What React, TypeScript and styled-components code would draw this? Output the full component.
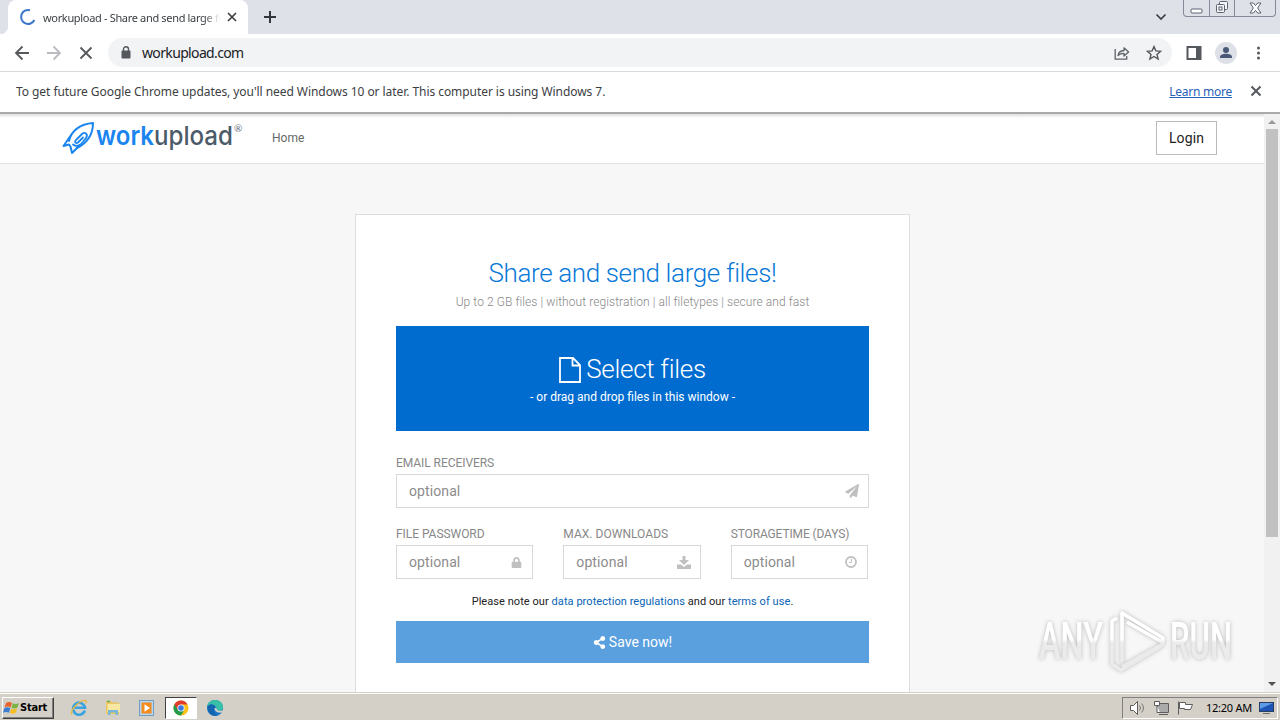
import React from "react";
import styled, { createGlobalStyle, css } from "styled-components";
import { FaPaperPlane, FaLock, FaShareAlt } from "react-icons/fa";

const App: React.FC = () => {
  return (
    <Desktop>
      <GlobalStyle />
      <TabStrip>
        <TabCurve />
        <Tab>
          <Spinner viewBox="0 0 18 18">
            <path
              d="M11 2.2A7 7 0 1 0 15.4 12"
              fill="none"
              stroke="#3b78c9"
              strokeWidth="2"
            />
          </Spinner>
          <TabTitle>workupload - Share and send large files</TabTitle>
          <svg width="10" height="10" viewBox="0 0 10 10">
            <path d="M1 1l8 8M9 1l-8 8" stroke="#3c4043" strokeWidth="1.7" />
          </svg>
        </Tab>
        <NewTab width="12" height="12" viewBox="0 0 12 12">
          <path d="M6 0v12M0 6h12" stroke="#33373b" strokeWidth="2" />
        </NewTab>
        <Chevron width="12" height="8" viewBox="0 0 12 8">
          <path
            d="M1.5 1.5L6 6l4.5-4.5"
            fill="none"
            stroke="#3c4043"
            strokeWidth="1.7"
          />
        </Chevron>
        <WindowButtons>
          <WindowButton $width={25}>
            <svg width="13" height="6" viewBox="0 0 13 6">
              <rect x="1" y="1" width="11" height="4" rx="1" fill="#fff" stroke="#5c6270" />
            </svg>
          </WindowButton>
          <WindowButton $width={25}>
            <svg width="14" height="14" viewBox="0 0 14 14">
              <g fill="#f4f6f9" stroke="#5c6270">
                <rect x="4.5" y="1.5" width="8" height="8" rx="1" />
                <rect x="1.5" y="4.5" width="8" height="8" rx="1" />
                <rect x="4" y="7" width="3" height="3" />
              </g>
            </svg>
          </WindowButton>
          <WindowButton $width={41}>
            <svg width="13" height="12" viewBox="0 0 13 12">
              <path
                d="M1 1h3.4l2.1 2.6L8.600 1H12L8.600 6l3.400 5H8.600L6.500 8.400 4.400 11H1l3.400-5z"
                fill="#fff"
                stroke="#5c6270"
              />
            </svg>
          </WindowButton>
        </WindowButtons>
      </TabStrip>

      <Toolbar>
        <NavIcons width="82" height="16" viewBox="0 0 82 16">
          <g fill="none" strokeWidth="1.8">
            <path d="M15 8H2M8.500 1.500L2 8l6.500 6.500" stroke="#55585c" />
            <path d="M33 8h13M39.500 1.500L46 8l-6.500 6.500" stroke="#b9bbbe" />
            <path d="M66.500 2.500l11 11M77.500 2.500l-11 11" stroke="#55585c" />
          </g>
        </NavIcons>
        <AddressBar>
          <svg width="10" height="13" viewBox="0 0 10 13">
            <rect x="0.500" y="4.500" width="9" height="8" rx="1" fill="#55585c" />
            <path d="M2.500 5V3.200a2.500 2.500 0 0 1 5 0V5" fill="none" stroke="#55585c" strokeWidth="1.400" />
          </svg>
          <Url>workupload.com</Url>
          <svg width="16" height="14" viewBox="0 0 16 14">
            <g fill="none" stroke="#5f6368" strokeWidth="1.300">
              <path d="M1.200 3v10.200h11.500V10" />
              <path d="M4 9.500c.5-3.200 2.500-4.800 6-5V1.800L14.600 6 10 10V7.300C7.500 7.200 5.600 7.800 4 9.500z" strokeLinejoin="round" />
            </g>
          </svg>
          <Star width="16" height="16" viewBox="0 0 16 16">
            <path
              d="M8 1.600l1.900 4.300 4.700.4-3.600 3.100 1.100 4.600L8 11.500 3.900 14 5 9.400 1.400 6.300l4.700-.4z"
              fill="none"
              stroke="#55585c"
              strokeWidth="1.400"
            />
          </Star>
        </AddressBar>
        <ToolbarEnd width="90" height="24" viewBox="0 0 90 24">
          <path d="M4.500 6h13v12h-13z" fill="#fff" stroke="#55585c" strokeWidth="2" />
          <path d="M13 6h5v12h-5z" fill="#55585c" />
          <circle cx="43" cy="12" r="11" fill="#dde1e7" />
          <circle cx="43" cy="9" r="3" fill="#4a5878" />
          <path d="M37 17v-1.200c0-2 3-3.100 6-3.100s6 1.100 6 3.100V17z" fill="#4a5878" />
          <g fill="#55585c">
            <circle cx="75.500" cy="7" r="1.500" />
            <circle cx="75.500" cy="12" r="1.500" />
            <circle cx="75.500" cy="17" r="1.500" />
          </g>
        </ToolbarEnd>
      </Toolbar>

      <InfoBar>
        <InfoText>
          To get future Google Chrome updates, you'll need Windows 10 or later.
          This computer is using Windows 7.
        </InfoText>
        <LearnMore>Learn more</LearnMore>
        <svg width="12" height="12" viewBox="0 0 12 12">
          <path d="M1.500 1.500l9 9M10.500 1.500l-9 9" stroke="#55585c" strokeWidth="2" />
        </svg>
      </InfoBar>

      <Viewport>
        <Page>
          <Header>
            <Logo />
            <HomeLink>Home</HomeLink>
            <LoginButton>Login</LoginButton>
          </Header>
          <Card>
            <Title>Share and send large files!</Title>
            <Subtitle>
              Up to 2 GB files | without registration | all filetypes | secure
              and fast
            </Subtitle>
            <DropZone>
              <SelectLine>
                <svg width="22" height="26" viewBox="0 0 22 26">
                  <path
                    d="M1 1h13l7 7v17H1zM13.500 1v7.500H21"
                    fill="none"
                    stroke="#fff"
                    strokeWidth="1.800"
                  />
                </svg>
                <SelectText>Select files</SelectText>
              </SelectLine>
              <DropHint>- or drag and drop files in this window -</DropHint>
            </DropZone>
            <Field>
              <Label $spacing={-0.06}>EMAIL RECEIVERS</Label>
              <InputBox>
                <Placeholder>optional</Placeholder>
                <FaPaperPlane size={14} />
              </InputBox>
            </Field>
            <FieldRow>
              <Field>
                <Label $spacing={-0.05}>FILE PASSWORD</Label>
                <InputBox>
                  <Placeholder>optional</Placeholder>
                  <LockIcon size={11} />
                </InputBox>
              </Field>
              <Field>
                <Label $spacing={0.03}>MAX. DOWNLOADS</Label>
                <InputBox>
                  <Placeholder>optional</Placeholder>
                  <svg width="14" height="13" viewBox="0 0 14 13">
                    <path d="M5.500 0h3v4H12L7 9 2 4h3.500z" fill="currentColor" />
                    <path d="M0 8.500h4L7 11l3-2.500h4V13H0z" fill="currentColor" />
                  </svg>
                </InputBox>
              </Field>
              <Field>
                <Label $spacing={-0.13}>STORAGETIME (DAYS)</Label>
                <InputBox>
                  <Placeholder>optional</Placeholder>
                  <ClockIcon width="12" height="12" viewBox="0 0 12 12">
                    <circle cx="6" cy="6" r="5" fill="none" stroke="currentColor" strokeWidth="1.800" />
                    <path d="M6.500 3v3.500H4" fill="none" stroke="currentColor" />
                  </ClockIcon>
                </InputBox>
              </Field>
            </FieldRow>
            <Notice>
              Please note our <a>data protection regulations</a> and our{" "}
              <a>terms of use</a>.
            </Notice>
            <SaveButton>
              <FaShareAlt size={13} />
              <span>Save now!</span>
            </SaveButton>
          </Card>
          <Watermark />
        </Page>
        <Scrollbar>
          <Arrow $up />
          <Thumb />
          <Arrow />
        </Scrollbar>
      </Viewport>

      <Taskbar>
        <StartButton>
          <svg width="17" height="16" viewBox="0 0 17 16">
            <path d="M3 3c2-1.500 4-1.500 6 0L7.500 7.500c-2-1.200-3.700-1.200-6 0z" fill="#e8622c" />
            <path d="M9.800 3.300c2 1 4 1 6.200-.3L14.500 7.500c-2 1.400-4 1.300-6 .4z" fill="#7cb342" />
            <path d="M1.300 8.300c2-1.300 4-1.200 6 0L6 12.800c-2-1.200-4-1.200-6 0z" fill="#3c7fd0" />
            <path d="M8.200 8.700c2 1 4 .9 6-.4l-1.400 4.500c-2 1.300-4 1.300-6 .3z" fill="#f6bd27" />
          </svg>
          <span>Start</span>
        </StartButton>
        <QuickItem>
          <svg width="18" height="18" viewBox="0 0 18 18">
            <path d="M14.800 11.500A6 6 0 1 1 15 8.800H5" fill="none" stroke="#3ba3df" strokeWidth="2.600" />
            <path d="M2 15.500C-.5 13 6 4.500 12 2c4-1.500 5 0 3.800 2.500" fill="none" stroke="#e8b93c" strokeWidth="1.300" />
          </svg>
        </QuickItem>
        <QuickItem>
          <svg width="18" height="18" viewBox="0 0 18 18">
            <path d="M2 2h5l1 1.500h7V15H2z" fill="#e9c763" />
            <path d="M3.500 5H16v8H3.500z" fill="#f8e7a2" />
            <path d="M4 16v-5h10v5h-2.500v-2.500h-5V16z" fill="#76b7d9" />
            <path d="M3 2.500h3" stroke="#69ad49" strokeWidth="1.500" />
          </svg>
        </QuickItem>
        <QuickItem>
          <svg width="18" height="18" viewBox="0 0 18 18">
            <rect x="1.500" y="1.500" width="14" height="15" fill="#b9d6ee" stroke="#6f9dc3" />
            <rect x="3.500" y="3.500" width="10" height="11" fill="#f28a1c" />
            <path d="M6.500 5.200l5.500 3.800-5.500 3.800z" fill="#fff" />
          </svg>
        </QuickItem>
        <QuickItem $active>
          <svg width="16" height="16" viewBox="0 0 16 16">
            <circle cx="8" cy="8" r="7.500" fill="#fbc116" />
            <path d="M8 8L1.500 4.200A7.500 7.500 0 0 0 8 15.500L11.200 10z" fill="#249a4b" />
            <path d="M8 8L4.800 9.900 1.500 4.200A7.500 7.500 0 0 1 14.500 4.500H8z" fill="#e23c2e" />
            <circle cx="8" cy="8" r="3.600" fill="#fff" />
            <circle cx="8" cy="8" r="2.800" fill="#3b79e0" />
          </svg>
        </QuickItem>
        <QuickItem>
          <svg width="18" height="18" viewBox="0 0 18 18">
            <circle cx="9" cy="9" r="8" fill="#1976c5" />
            <path d="M1 9C1 3.500 5 1 9.200 1 14 1 17 4.500 17 8c0 3-2.500 4-4.500 4S10 11 10.500 9.500C11 6.500 4 4.500 1 9z" fill="#38bfa8" />
            <path d="M1.500 7C5 4 9 5.500 9 8c-2 1.500-2 6 2.500 8.500C5 18 1 13 1.500 7z" fill="#1564b0" />
            <path d="M9.500 9c0 3.500 3.500 4.500 7 3.200" fill="none" stroke="#d4d0c8" strokeWidth="1.800" />
          </svg>
        </QuickItem>
        <Tray>
          <svg width="72" height="18" viewBox="0 0 72 18">
            <g fill="#fff" stroke="#5d5d5d">
              <path d="M1.500 6.500h3l4-4v13l-4-4h-3z" />
              <path d="M10.500 6.500q2 2.500 0 5M12.500 4.500q4 4.500 0 9" fill="none" stroke="#777" />
              <path d="M28.500 4.500h11v9h-11z" fill="#aaa" />
              <path d="M30 15.500h9" />
              <path d="M25.500 2.500h5v4h-5zM28 6.500v7h3" />
              <path d="M49.500 2.500v13M50.500 3.500h6v2h7l-2 5h-6v-1h-5z" />
            </g>
          </svg>
          <Clock>12:20 AM</Clock>
          <svg width="15" height="14" viewBox="0 0 15 14">
            <rect x="0.500" y="1.500" width="14" height="9" fill="#1d55b5" stroke="#2a3d62" />
            <path d="M1 2h13L1 8z" fill="#5c9be8" />
            <path d="M4 12.500h7" stroke="#6d6d6d" />
          </svg>
        </Tray>
      </Taskbar>
    </Desktop>
  );
};

const Logo: React.FC = () => (
  <LogoSvg width="182" height="36" viewBox="0 0 182 36">
    <g fill="none" stroke="#1a85ee" strokeWidth="2" strokeLinejoin="round" strokeLinecap="round">
      <path d="M7 21C9 11 18 4 31 3c0 11-6 20-16 25" />
      <path d="M8 16.500L1.500 26l5.500-1.500 1.500 2L10 33l7-7" />
      <path d="M11 24.500c3 2.500 7 1 9-1.500l4-5c2.500-4-1-6.500-4-4l-6 6c-2 2.200 0 4 2 2.500l5-5" strokeWidth="1.800" />
    </g>
    <text x="34" y="25" fill="#1a85ee" fontFamily="Inter" fontWeight="600" fontSize="26" textLength="58" lengthAdjust="spacingAndGlyphs">
      work
    </text>
    <text x="92" y="25" fill="#4c5b69" fontFamily="Inter" fontWeight="500" fontSize="26" textLength="79" lengthAdjust="spacingAndGlyphs">
      upload
    </text>
    <text x="172" y="12" fill="#66727d" fontFamily="Lato" fontSize="10">
      ®
    </text>
  </LogoSvg>
);

const Watermark: React.FC = () => (
  <WatermarkSvg width="206" height="76" viewBox="0 0 206 76">
    <defs>
      <linearGradient id="fade" gradientUnits="userSpaceOnUse" x1="0" y1="0" x2="0" y2="76">
        <stop offset="0.450" stopColor="#fff" />
        <stop offset="0.500" stopColor="#ebebeb" />
      </linearGradient>
    </defs>
    <g fill="url(#fade)" fontFamily="Roboto" fontWeight="500" fontSize="51">
      <text x="5" y="54" textLength="64" lengthAdjust="spacingAndGlyphs">ANY</text>
      <text x="136" y="54" textLength="62" lengthAdjust="spacingAndGlyphs">RUN</text>
    </g>
    <g fill="none" stroke="url(#fade)" strokeWidth="3.500" strokeLinejoin="round">
      <path d="M83 13l-5 3v43l9 6 40-24" />
      <path d="M128 37L93 17M88 57V8l41 25v6L88 62" />
    </g>
  </WatermarkSvg>
);

export default App;

const GlobalStyle = createGlobalStyle`
  * {
    box-sizing: border-box;
  }

  body {
    margin: 0;
    overflow: hidden;
    font-family: "Roboto", sans-serif;
  }

  svg {
    display: block;
    flex-shrink: 0;
  }
`;

const tahoma = css`
  font-family: "Noto Sans", sans-serif;
`;

const Desktop = styled.div`
  display: flex;
  flex-direction: column;
  width: 1280px;
  height: 720px;
  overflow: hidden;
  background-color: #fff;
  white-space: nowrap;
`;

const TabStrip = styled.div`
  display: flex;
  height: 34px;
  background-color: #dee1e8;
`;

const TabCurve = styled.div`
  width: 8px;
  background: radial-gradient(circle at 0 26px, #dee1e8 8px, #fff 8.5px);
  clip-path: inset(26px 0 0 0);
`;

const Tab = styled.div`
  display: flex;
  align-items: center;
  width: 240px;
  height: 34px;
  padding-left: 11px;
  border-radius: 8px 8px 0 0;
  background-color: #fff;
`;

const Spinner = styled.svg`
  width: 18px;
  height: 18px;
`;

const TabTitle = styled.div`
  ${tahoma}
  width: 177px;
  margin: 0 7px 0 6px;
  overflow: hidden;
  font-size: 11px;
  letter-spacing: -0.33px;
  color: #3c4043;
  mask-image: linear-gradient(90deg, #000 91%, transparent 100%);
`;

const NewTab = styled.svg`
  margin: 11px 0 0 16px;
`;

const Chevron = styled.svg`
  margin: 13px 16px 0 auto;
`;

const WindowButtons = styled.div`
  display: flex;
  height: 17px;
  margin-right: 4px;
  border: 1px solid #858a98;
  border-top: none;
  border-radius: 0 0 4px 4px;
`;

const WindowButton = styled.div<{ $width: number }>`
  display: flex;
  align-items: flex-end;
  justify-content: center;
  width: ${({ $width }) => $width}px;
  padding-bottom: 2px;

  & + & {
    border-left: 1px solid #858a98;
  }
`;

const Toolbar = styled.div`
  display: flex;
  align-items: center;
  height: 38px;
  border-bottom: 1px solid #d8dadd;
`;

const NavIcons = styled.svg`
  margin-left: 14px;
`;

const AddressBar = styled.div`
  display: flex;
  align-items: center;
  width: 1064px;
  height: 29px;
  margin-left: 12px;
  padding: 0 10px 0 13px;
  border-radius: 15px;
  background-color: #f1f3f5;
`;

const Url = styled.div`
  ${tahoma}
  flex: 1;
  margin-left: 11px;
  font-size: 14px;
  letter-spacing: -0.65px;
  color: #202124;
`;

const Star = styled.svg`
  margin-left: 16px;
`;

const ToolbarEnd = styled.svg`
  margin-left: 11px;
`;

const InfoBar = styled.div`
  ${tahoma}
  display: flex;
  align-items: center;
  height: 42px;
  padding: 0 18px 2px 16px;
  border-bottom: 2px solid #aaa;
  font-size: 12px;
  color: #3c4043;
`;

const InfoText = styled.div`
  flex: 1;
  letter-spacing: -0.06px;
`;

const LearnMore = styled.a`
  margin-right: 18px;
  letter-spacing: -0.25px;
  color: #2862b8;
  text-decoration: underline;
`;

const Viewport = styled.div`
  display: flex;
  height: 578px;
`;

const Page = styled.div`
  position: relative;
  width: 1264px;
  overflow: hidden;
  background-color: #f7f7f7;
`;

const Header = styled.div`
  display: flex;
  align-items: center;
  height: 50px;
  padding: 0 47px 2px 62px;
  border-bottom: 1px solid #e0e0e0;
  background: linear-gradient(#dedede, #fff 4px);
`;

const LogoSvg = styled.svg`
  overflow: visible;
`;

const HomeLink = styled.a`
  flex: 1;
  margin-left: 28px;
  font-size: 12px;
  color: #666;
`;

const LoginButton = styled.div`
  display: flex;
  align-items: center;
  justify-content: center;
  width: 61px;
  height: 34px;
  border: 1px solid #bbb;
  background-color: #fff;
  font-size: 14px;
  letter-spacing: 0.1px;
  color: #222;
`;

const Card = styled.div`
  width: 555px;
  height: 520px;
  margin: 50px 0 0 355px;
  padding: 42px 40px 0;
  border: 1px solid #ddd;
  background-color: #fff;
  text-align: center;
`;

const Title = styled.div`
  height: 35px;
  font-size: 26px;
  font-weight: 300;
  line-height: 33px;
  letter-spacing: -0.37px;
  color: #0878d8;
`;

const Subtitle = styled.div`
  height: 34px;
  font-size: 12px;
  font-weight: 300;
  line-height: 21px;
  letter-spacing: 0.08px;
  color: #888;
`;

const DropZone = styled.div`
  height: 105px;
  padding-top: 27px;
  background-color: #006cd0;
  color: #fff;
`;

const SelectLine = styled.div`
  display: flex;
  align-items: center;
  justify-content: center;
  gap: 5px;
  height: 33px;
`;

const SelectText = styled.span`
  margin-top: -2px;
  font-size: 26px;
  font-weight: 300;
  letter-spacing: -0.3px;
`;

const DropHint = styled.div`
  font-size: 12px;
  line-height: 23px;
`;

const Field = styled.div`
  flex: 1;
  margin-top: 24px;
  text-align: left;
`;

const FieldRow = styled.div`
  display: flex;
  gap: 30px;
  width: 472px;

  ${Field} {
    margin-top: 18px;
  }
`;

const Label = styled.div<{ $spacing: number }>`
  height: 19px;
  font-size: 12px;
  line-height: 16px;
  letter-spacing: ${({ $spacing }) => $spacing}px;
  color: #888;
`;

const InputBox = styled.div`
  display: flex;
  align-items: center;
  justify-content: space-between;
  height: 34px;
  padding: 0 9px 0 12px;
  border: 1px solid #d8d8d8;
  color: #c0c0c0;
`;

const Placeholder = styled.span`
  font-size: 14px;
  letter-spacing: 0.1px;
  color: #8c8c8c;
`;

const LockIcon = styled(FaLock)`
  margin-right: 1px;
`;

const ClockIcon = styled.svg`
  margin-right: 1px;
`;

const Notice = styled.div`
  height: 42px;
  padding-top: 14px;
  font-size: 11px;
  line-height: 17px;
  letter-spacing: 0.06px;
  color: #222;

  a {
    color: #0863b5;
  }
`;

const SaveButton = styled.div`
  display: flex;
  align-items: center;
  justify-content: center;
  gap: 3px;
  height: 42px;
  background-color: #5a9fde;
  font-size: 14px;
  color: #fff;
`;

const WatermarkSvg = styled.svg`
  position: absolute;
  top: 491px;
  left: 1034px;
  filter: drop-shadow(0 0 2px rgba(0, 0, 0, 0.25));
`;

const Scrollbar = styled.div`
  display: flex;
  flex-direction: column;
  align-items: center;
  width: 16px;
  padding: 6px 0;
  background-color: #f1f1f1;
`;

const Arrow = styled.div<{ $up?: boolean }>`
  width: 8px;
  height: 4px;
  background-color: ${({ $up }) => ($up ? "#999" : "#505050")};
  clip-path: ${({ $up }) =>
    $up ? "polygon(50% 0, 100% 100%, 0 100%)" : "polygon(0 0, 100% 0, 50% 100%)"};
`;

const Thumb = styled.div`
  width: 12px;
  height: 408px;
  margin: 5px 0 auto;
  background-color: #c1c1c1;
`;

const Taskbar = styled.div`
  ${tahoma}
  display: flex;
  align-items: center;
  height: 28px;
  padding: 2px 2px 0;
  border-top: 1px solid #d4d0c8;
  box-shadow: inset 0 1px 0 #fff;
  background-color: #d4d0c8;
`;

const StartButton = styled.div`
  display: flex;
  align-items: center;
  width: 52px;
  height: 22px;
  margin-right: 9px;
  border: 1px solid;
  border-color: #fff #404040 #404040 #fff;
  box-shadow: inset -1px -1px 0 #808080;
  font-family: "DejaVu Sans Condensed", "DejaVu Sans", sans-serif;
  font-size: 11px;
  font-weight: 700;
  letter-spacing: -0.2px;
  color: #000;
`;

const QuickItem = styled.div<{ $active?: boolean }>`
  display: flex;
  align-items: center;
  justify-content: center;
  width: 32px;
  height: 22px;
  margin-right: 2px;
  ${({ $active }) =>
    $active &&
    css`
      border: 1px solid;
      border-color: #404040 #fff #fff #404040;
      background-color: #fff;
    `}
`;

const Tray = styled.div`
  display: flex;
  align-items: center;
  width: 156px;
  height: 22px;
  margin-left: auto;
  padding: 0 3px 0 6px;
  border: 1px solid;
  border-color: #808080 #fff #fff #808080;
`;

const Clock = styled.div`
  flex: 1;
  padding-left: 5px;
  font-size: 11px;
  letter-spacing: -0.25px;
  color: #000;
`;
